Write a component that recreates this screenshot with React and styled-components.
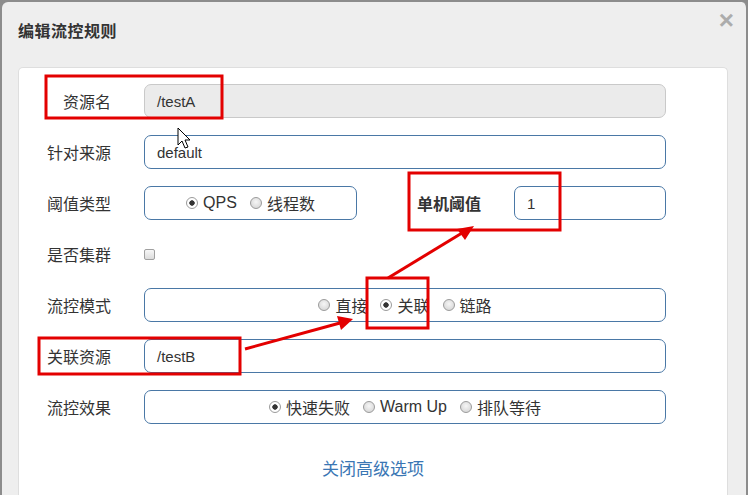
import React from "react";
import styled, { createGlobalStyle } from "styled-components";

const Global = createGlobalStyle`
  html, body { margin: 0; padding: 0; background: #ffffff; }
  body { font-family: "Liberation Sans", "Noto Sans CJK SC", sans-serif; }
`;

const Page = styled.div`
  position: relative;
  width: 753px;
  height: 502px;
  overflow: hidden;
  background: #ffffff;
`;

const Frame = styled.div`
  box-sizing: border-box;
  width: 748px;
  height: 495px;
  padding: 2px 0 0 2px;
  background: #8c8c8c;
`;

const Dialog = styled.div`
  box-sizing: border-box;
  height: 100%;
  display: flex;
  flex-direction: column;
  background: #eeeeee;
  border-right: 2px solid #8c8c8c;
  border-radius: 6px 6px 0 0;
`;

const Header = styled.div`
  height: 65px;
  display: flex;
  justify-content: space-between;
  align-items: flex-start;
  padding: 0 12px 0 16px;
`;

const Title = styled.h4`
  margin: 20px 0 0;
  line-height: 20px;
  font-size: 16px;
  font-weight: 700;
  color: #333333;
  letter-spacing: 0.5px;
`;

const Close = styled.span`
  margin-top: 5px;
  font-size: 26px;
  line-height: 26px;
  color: #acacac;
  font-weight: 700;
`;

const Panel = styled.div`
  flex: 1;
  margin: 0 18px 0 16px;
  padding-top: 16px;
  background: #ffffff;
  border: 1px solid #dedede;
  border-bottom: none;
  border-radius: 5px 5px 0 0;
  display: flex;
  flex-direction: column;
  gap: 17px;
`;

const Row = styled.div`
  display: flex;
  align-items: center;
  height: 34px;
`;

const Label = styled.label`
  width: ${(p) => p.$w || 92}px;
  margin-right: 33px;
  text-align: right;
  font-size: 16px;
  color: #333333;
  font-weight: ${(p) => (p.$bold ? 700 : 400)};
  white-space: nowrap;
`;

const Input = styled.div`
  box-sizing: border-box;
  width: ${(p) => p.$w || 522}px;
  height: 34px;
  display: flex;
  align-items: center;
  padding: 0 12px;
  font-size: 15px;
  color: #333333;
  background: ${(p) => (p.$disabled ? "#ebebeb" : "#ffffff")};
  border: 1px solid ${(p) => (p.$disabled ? "#c9c9c9" : "#4a78a6")};
  border-radius: 7px;
`;

const RadioBox = styled(Input)`
  justify-content: center;
  gap: 13px;
  padding: 0 8px;
`;

const Option = styled.span`
  display: inline-flex;
  align-items: center;
  gap: 5px;
  font-size: 16px;
  color: #333333;
`;

const Dot = styled.span`
  box-sizing: border-box;
  width: 12px;
  height: 12px;
  border-radius: 50%;
  border: 1px solid #9b9b9b;
  background: ${(p) =>
    p.$on
      ? "radial-gradient(circle, #333 0 2.4px, #fff 3px)"
      : "radial-gradient(circle at 50% 40%, #f6f6f6, #d0d0d0)"};
`;

const Check = styled.span`
  box-sizing: border-box;
  width: 11px;
  height: 11px;
  border-radius: 2px;
  border: 1px solid #a0a0a0;
  background: linear-gradient(#f7f7f7, #dcdcdc);
`;

const LinkRow = styled.div`
  margin-top: 14px;
  text-align: center;
  font-size: 17px;
  color: #3a76b4;
`;

const Notes = styled.svg`
  position: absolute;
  left: 0;
  top: 0;
  pointer-events: none;
`;

const Radio = ({ on, children }) => (
  <Option>
    <Dot $on={on} />
    {children}
  </Option>
);

const boxes = [
  [46, 76, 176, 42],
  [409, 173, 151, 57],
  [367, 278, 61, 50],
  [39, 338, 201, 36],
];

const App = () => (
  <Page>
    <Global />
    <Frame>
      <Dialog>
        <Header>
          <Title>编辑流控规则</Title>
          <Close>×</Close>
        </Header>
        <Panel>
          <Row>
            <Label>资源名</Label>
            <Input $disabled>/testA</Input>
          </Row>
          <Row>
            <Label>针对来源</Label>
            <Input>default</Input>
          </Row>
          <Row>
            <Label>阈值类型</Label>
            <RadioBox $w={213}>
              <Radio on>QPS</Radio>
              <Radio>线程数</Radio>
            </RadioBox>
            <Label $w={124} $bold>单机阈值</Label>
            <Input $w={152}>1</Input>
          </Row>
          <Row>
            <Label>是否集群</Label>
            <Check />
          </Row>
          <Row>
            <Label>流控模式</Label>
            <RadioBox>
              <Radio>直接</Radio>
              <Radio on>关联</Radio>
              <Radio>链路</Radio>
            </RadioBox>
          </Row>
          <Row>
            <Label>关联资源</Label>
            <Input>/testB</Input>
          </Row>
          <Row>
            <Label>流控效果</Label>
            <RadioBox>
              <Radio on>快速失败</Radio>
              <Radio>Warm Up</Radio>
              <Radio>排队等待</Radio>
            </RadioBox>
          </Row>
          <LinkRow>关闭高级选项</LinkRow>
        </Panel>
      </Dialog>
    </Frame>
    <Notes width="753" height="502" viewBox="0 0 753 502">
      {boxes.map(([x, y, w, h], i) => (
        <rect key={i} x={x} y={y} width={w} height={h} fill="none" stroke="#e30000" strokeWidth="3" />
      ))}
      <line x1="388" y1="278" x2="462" y2="233" stroke="#e30000" strokeWidth="3" />
      <polygon points="474,226 457,229 465,240" fill="#e30000" />
      <line x1="245" y1="349" x2="340" y2="323" stroke="#e30000" strokeWidth="3" />
      <polygon points="353,319 337,316 341,330" fill="#e30000" />
      <path
        d="M178 128 L178 145 L182 141 L185 148 L188 147 L185 140 L190 140 Z"
        fill="#ffffff"
        stroke="#000000"
        strokeWidth="1"
        strokeLinejoin="round"
      />
    </Notes>
  </Page>
);

export default App;
